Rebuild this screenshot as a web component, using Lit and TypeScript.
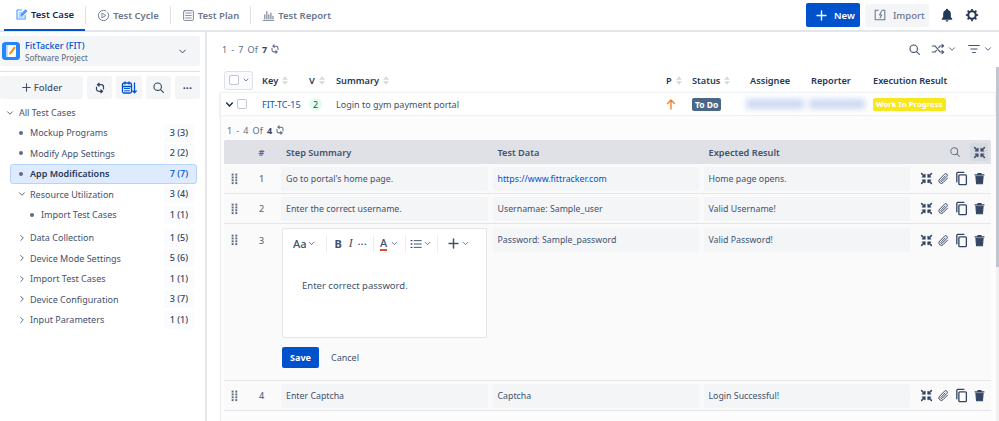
import { LitElement, css, html, svg } from "lit";
import { customElement } from "lit/decorators.js";

const icon = (w: number, body: unknown, cls = "") => html`<svg class="ic ${cls}" width=${w} height=${w} viewBox="0 0 16 16" fill="none" stroke="currentColor" stroke-width="1.4" stroke-linecap="round" stroke-linejoin="round">${body}</svg>`;

const chevDown = svg`<path d="M4 6l4 4 4-4"/>`;
const chevRight = svg`<path d="M6 4l4 4-4 4"/>`;
const search = svg`<circle cx="7" cy="7" r="4.6"/><path d="M10.5 10.5L14 14"/>`;
const refresh = svg`<path d="M7 2.5L5 4.2 7 5.8M5.2 4.2H9.5a2.5 2.5 0 0 1 2.5 2.5V9"/><path d="M9 13.5l2-1.7-2-1.6M10.8 11.8H6.5A2.5 2.5 0 0 1 4 9.3V7"/>`;
const expand = svg`<path d="M2 2l4 4M6 3v3H3M14 2l-4 4M10 3v3h3M2 14l4-4M6 13v-3H3M14 14l-4-4M10 13v-3h3" stroke-width="1.8"/>`;
const clip = svg`<path d="M13 7.5l-5.5 5.6a3 3 0 0 1-4.3-4.2l6-6.2a2 2 0 0 1 2.9 2.8l-5.8 6a.9.9 0 0 1-1.3-1.3L10 5" stroke-width="1.2"/>`;
const copy = svg`<rect x="5.2" y="4.2" width="8" height="10.3" rx="1"/><path d="M3 11.5V2.5a1 1 0 0 1 1-1h6.5"/>`;
const trash = svg`<path d="M2.5 3.6h11M6 3V2h4v1" /><path d="M3.6 5.2h8.8l-.8 9.3H4.4z" fill="currentColor"/>`;
const drag = svg`<g fill="currentColor" stroke="none">${[2, 5.5, 9, 12.5].map((y) => svg`<rect x="4.5" y=${y} width="2.4" height="2.4"/><rect x="9" y=${y} width="2.4" height="2.4"/>`)}</g>`;
const sort = html`<svg class="sort" width="6" height="9" viewBox="0 0 7 10" fill="#d5d9e0"><path d="M3.5 0L7 4H0zM3.5 10L0 6h7z"/></svg>`;

type Node = { label: string; count: string; kind: "dot" | "open" | "closed"; sub?: boolean; active?: boolean; gap?: boolean };
const tree: Node[] = [
  { label: "Mockup Programs", count: "3 (3)", kind: "dot" },
  { label: "Modify App Settings", count: "2 (2)", kind: "dot" },
  { label: "App Modifications", count: "7 (7)", kind: "dot", active: true },
  { label: "Resource Utilization", count: "3 (4)", kind: "open" },
  { label: "Import Test Cases", count: "1 (1)", kind: "dot", sub: true },
  { label: "Data Collection", count: "1 (5)", kind: "closed", gap: true },
  { label: "Device Mode Settings", count: "5 (6)", kind: "closed" },
  { label: "Import Test Cases", count: "1 (1)", kind: "closed" },
  { label: "Device Configuration", count: "3 (7)", kind: "closed" },
  { label: "Input Parameters", count: "1 (1)", kind: "closed" },
];

const steps = [
  { n: 1, step: "Go to portal's home page.", data: "https://www.fittracker.com", result: "Home page opens.", link: true },
  { n: 2, step: "Enter the correct username.", data: "Usernamae: Sample_user", result: "Valid Username!" },
  { n: 3, step: "", data: "Password: Sample_password", result: "Valid Password!", edit: true },
  { n: 4, step: "Enter Captcha", data: "Captcha", result: "Login Successful!" },
];

@customElement("app-root")
export class AppRoot extends LitElement {
  renderTabs() {
    return html`
      <div class="tab active">
        ${icon(13, svg`<path d="M12.5 9v4.5h-10v-11H8"/><path d="M5 6h3M5 8.5h2M5 11h5" stroke-width="1"/><path d="M7.5 9.5L7.8 7.6 13 2.4l1.3 1.3-5 5.3z" fill="#4c9aff"/>`)}
        Test Case
      </div>
      <i class="tabsep"></i>
      <div class="tab">
        ${icon(13, svg`<circle cx="8" cy="8" r="6.3" stroke-dasharray="32 3" stroke-width="1.2"/><path d="M6.5 5.3L10.8 8l-4.3 2.7z" stroke-width="1.1"/>`)}
        Test Cycle
      </div>
      <i class="tabsep"></i>
      <div class="tab">
        ${icon(13, svg`<rect x="2" y="2" width="12" height="12" rx="1" stroke-width="1.1"/><path d="M4.5 5h7M4.5 8h7M4.5 11h7" stroke-width="1"/>`)}
        Test Plan
      </div>
      <i class="tabsep"></i>
      <div class="tab">
        ${icon(13, svg`<path d="M1.5 14h13" stroke-width="1.1"/><path d="M3.5 12V7M6 12V3M8.5 12V7M11 12V5M13.5 12V9" stroke-width="1.3"/>`)}
        Test Report
      </div>
      <div class="top-actions">
        <button class="new">${icon(13, svg`<path d="M8 2.5v11M2.5 8h11" stroke-width="1.7"/>`)}New</button>
        <button class="import">${icon(14, svg`<path d="M10 2.5h3.5v11h-11v-11H6" stroke-width="1.2"/><path d="M9.5 4L7.5 8h2.5l-2 3.5" stroke-width="1.2"/>`)}Import</button>
        <svg class="bell" width="14" height="14" viewBox="0 0 16 16" fill="#253858"><path d="M8 1a1.4 1.4 0 0 1 1.4 1.3C11.5 3 12.4 4.800 12.4 7v3.400L14 12.500v.8H2v-.8l1.600-2.100V7c0-2.200.9-4 3-4.700A1.400 1.400 0 0 1 8 1zM6.300 14h3.400a1.700 1.700 0 0 1-3.400 0z"/></svg>
        <svg class="gear" width="14" height="14" viewBox="0 0 16 16" fill="none" stroke="#253858"><circle cx="8" cy="8" r="4.300" stroke-width="2.400"/><path d="M8 1v2.200M8 12.800V15M1 8h2.200M12.800 8H15M3 3l1.600 1.600M11.400 11.400L13 13M13 3l-1.600 1.600M4.600 11.400L3 13" stroke-width="2"/></svg>
      </div>
    `;
  }

  renderSidebar() {
    return html`
      <aside>
        <div class="project">
          <svg width="18" height="18" viewBox="0 0 18 18">
            <rect width="18" height="18" rx="3.500" fill="#2684ff"/>
            <rect x="4" y="3" width="10" height="12" rx="1" fill="#fff"/>
            <path d="M4 3h1.800v12H4z" fill="#b3d4ff"/>
            <path d="M7 12.800l.6-2.400 4.500-6 1.700 1.300-4.500 6z" fill="#ff8b00"/>
          </svg>
          <div class="ptext">
            <div class="pname">FitTacker (FIT)</div>
            <div class="ptype">Software Project</div>
          </div>
          ${icon(11, chevDown, "pchev")}
        </div>
        <div class="tools">
          <button class="tool folder">${icon(11, svg`<path d="M8 2.500v11M2.500 8h11" stroke-width="1.600"/>`)}Folder</button>
          <button class="tool">${icon(14, refresh)}</button>
          <button class="tool blue">${icon(16, svg`<rect x="1.500" y="3" width="9" height="10" rx="1.500" stroke-width="1.300"/><path d="M1.500 6.500h9M4 1.800V4M8 1.800V4M13.500 3v9.500M11.800 11l1.700 1.800 1.700-1.800" stroke-width="1.300"/><path d="M3.500 8.500h5M3.500 10.800h5" stroke-width="1"/>`)}</button>
          <button class="tool">${icon(13, search)}</button>
          <button class="tool dots">···</button>
        </div>
        <div class="all">${icon(10, chevDown)}All Test Cases</div>
        ${tree.map(
          (n) => html`
            <div class="node ${n.active ? "active" : ""} ${n.sub ? "sub" : ""} ${n.gap ? "gap" : ""}">
              <span class="mark">
                ${n.kind === "dot" ? html`<i class="dot"></i>` : icon(10, n.kind === "open" ? chevDown : chevRight)}
              </span>
              <span class="label">${n.label}</span>
              <span class="count">${n.count}</span>
            </div>
          `
        )}
      </aside>
    `;
  }

  renderEditor() {
    return html`
      <div class="editor-wrap">
        <div class="editor">
          <div class="etools">
            <span class="aa">Aa</span>${icon(9, chevDown, "mini")}
            <i class="esep"></i>
            <b class="eb">B</b><i class="ei">I</i><span class="edots">···</span>
            <i class="esep s2"></i>
            <span class="ea">A</span>${icon(9, chevDown, "mini m2")}
            <i class="esep s3"></i>
            ${icon(12, svg`<path d="M5.500 3.500H15M5.500 8H15M5.500 12.500H15" stroke-width="1.300"/><path d="M1.500 3.500h1M1.500 8h1M1.500 12.500h1" stroke-width="1.800"/>`)}${icon(9, chevDown, "mini m1")}
            <i class="esep s4"></i>
            ${icon(13, svg`<path d="M8 2.500v11M2.500 8h11" stroke-width="1.800"/>`)}${icon(9, chevDown, "mini m1")}
          </div>
          <div class="etext">Enter correct password.</div>
        </div>
        <div class="actions">
          <button class="save">Save</button>
          <span class="cancel">Cancel</span>
        </div>
      </div>
    `;
  }

  renderStep(s: (typeof steps)[number]) {
    return html`
      <div class="srow ${s.edit ? "editing" : ""}">
        <span class="grip">${icon(13, drag)}</span>
        <span class="num">${s.n}</span>
        ${s.edit ? this.renderEditor() : html`<div class="cell">${s.step}</div>`}
        <div class="cell ${s.link ? "link" : ""}">${s.data}</div>
        <div class="cell">${s.result}</div>
        <div class="ops">
          ${icon(13, expand)}${icon(13, clip)}${icon(15, copy)}${icon(13, trash)}
        </div>
      </div>
    `;
  }

  render() {
    return html`
      <div class="top">${this.renderTabs()}</div>
      <div class="body">
        ${this.renderSidebar()}
        <main>
          <div class="pager">
            <span class="range">1 - 7 Of <b>7</b></span>${icon(12, refresh)}
            <div class="pright">
              ${icon(13, search)}
              <span class="gap-ic"></span>
              ${icon(14, svg`<path d="M1.500 4.500h3l6 7h3.500M1.500 11.500h3l1.700-2M8.800 6.400l1.700-1.900H14M12.500 2.800L14.500 4.500l-2 1.700M12.500 9.800l2 1.700-2 1.700" stroke-width="1.200"/>`)}
              ${icon(10, chevDown)}
              <span class="gap-ic"></span>
              ${icon(14, svg`<path d="M2 4h12M4.500 8h7M6.500 12h3" stroke-width="1.300"/>`)}
              ${icon(10, chevDown)}
            </div>
          </div>
          <div class="thead cols">
            <span class="selbox"><i class="check"></i>${icon(8, chevDown)}</span>
            <span class="th">Key ${sort}</span>
            <span class="th">V ${sort}</span>
            <span class="th">Summary ${sort}</span>
            <span class="th">P ${sort}</span>
            <span class="th">Status ${sort}</span>
            <span class="th">Assignee</span>
            <span class="th">Reporter</span>
            <span class="th">Execution Result</span>
          </div>
          <div class="case cols">
            <span class="rowsel">${icon(9, svg`<path d="M3 5.500l5 5 5-5" stroke-width="2.600"/>`)}<i class="check"></i></span>
            <span class="key">FIT-TC-15</span>
            <span><span class="ver">2</span></span>
            <span class="sum">Login to gym payment portal</span>
            <span class="prio"><svg width="10" height="11" viewBox="0 0 10 11" fill="none" stroke="#f57c22" stroke-width="1.300" stroke-linecap="round" stroke-linejoin="round"><path d="M5 10V1M1.500 4.500L5 1l3.500 3.500"/></svg></span>
            <span><span class="todo">To Do</span></span>
            <span class="blurred b1"></span>
            <span class="blurred b2"></span>
            <span><span class="wip">Work In Progress</span></span>
          </div>
          <div class="steps">
            <div class="spager"><span class="range">1 - 4 Of <b>4</b></span>${icon(12, refresh)}</div>
            <div class="shead">
              <span></span>
              <span class="num">#</span>
              <span class="sh">Step Summary</span>
              <span class="sh">Test Data</span>
              <span class="sh">Expected Result</span>
              <span class="shops">${icon(12, search)}<span class="exp">${icon(13, expand)}</span></span>
            </div>
            ${steps.map((s) => this.renderStep(s))}
          </div>
          <div class="track"><div class="thumb"></div></div>
        </main>
      </div>
    `;
  }

  static styles = css`
    :host {
      display: block;
      width: 999px;
      height: 421px;
      overflow: hidden;
      background: #fff;
      font-family: "Noto Sans", sans-serif;
      font-size: 9px;
      color: #42526e;
    }
    * { box-sizing: border-box; }
    button { font-family: inherit; border: none; cursor: pointer; }
    b { font-weight: 700; }
    .ic { flex: none; display: block; }

    .top {
      display: flex;
      align-items: center;
      height: 32px;
      padding-left: 4px;
      border-bottom: 2px solid #e4e6ea;
    }
    .tab {
      display: flex;
      align-items: center;
      gap: 3px;
      height: 31px;
      padding: 0 11px;
      font-size: 9.500px;
      font-weight: 600;
      color: #6b778c;
    }
    .tab.active {
      color: #172b4d;
      border-bottom: 2px solid #0052cc;
    }
    .tab.active .ic { color: #4c9aff; }
    .tab .ic { color: #6b778c; }
    .tabsep { width: 1px; height: 18px; background: #dfe1e6; }
    .top-actions { margin-left: auto; display: flex; align-items: center; }
    .new {
      display: flex;
      align-items: center;
      gap: 6px;
      width: 54px;
      height: 24px;
      padding-left: 9px;
      margin-right: 5px;
      border-radius: 2px;
      background: #0052cc;
      color: #fff;
      font-size: 9.500px;
      font-weight: 600;
    }
    .import {
      display: flex;
      align-items: center;
      gap: 6px;
      width: 64px;
      height: 23px;
      padding-left: 8px;
      border-radius: 3px;
      background: #f4f5f7;
      color: #6b778c;
      font-size: 9.500px;
      font-weight: 500;
    }
    .bell { margin-left: 11px; }
    .gear { margin: 0 20px 0 11px; }

    .body { display: flex; height: 389px; }
    aside {
      flex: none;
      width: 207px;
      border-right: 2px solid #e4e6ea;
      padding-right: 5px;
    }
    .project {
      display: flex;
      align-items: center;
      height: 30px;
      margin-top: 4px;
      padding-left: 2px;
      gap: 5px;
      background: #f4f5f7;
      border-radius: 3px;
    }
    .pname { color: #0052cc; font-size: 9px; line-height: 12px; font-weight: 500; }
    .ptype { color: #6b778c; font-size: 8px; line-height: 11px; font-weight: 500; }
    .pchev { margin-left: auto; margin-right: 12px; color: #344563; }
    .tools {
      display: flex;
      gap: 4px;
      margin-top: 5px;
      padding-top: 4px;
      border-top: 1px solid #dfe1e6;
    }
    .tool {
      display: flex;
      align-items: center;
      justify-content: center;
      width: 25.250px;
      height: 23px;
      border-radius: 3px;
      background: #f4f5f7;
      color: #344563;
      font-size: 9.500px;
    }
    .tool.folder { width: 83px; gap: 2px; color: #42526e; font-weight: 500; }
    .tool.blue { color: #0052cc; }
    .tool.dots { font-weight: 700; font-size: 11px; }
    .all {
      display: flex;
      align-items: center;
      gap: 4px;
      height: 20px;
      margin-top: 3.500px;
      padding-left: 5px;
    }
    .node {
      display: flex;
      align-items: center;
      height: 20.500px;
      padding-left: 17px;
    }
    .node.sub { padding-left: 28px; }
    .node.gap { margin-top: 2.500px; }
    .mark { width: 13px; display: flex; flex: none; }
    .dot { width: 4px; height: 4px; margin-left: 2px; border-radius: 50%; background: #5e6c84; }
    .count {
      margin-left: auto;
      margin-right: 6px;
      padding: 0 6px;
      height: 18px;
      line-height: 18px;
      background: #fafbfc;
      border-radius: 2px;
      color: #344563;
      font-weight: 500;
    }
    .node.active {
      margin: 0 3px 0 10px;
      padding-left: 6px;
      background: #deebff;
      border: 1px solid #b3d4ff;
      border-radius: 3px;
    }
    .node.active .label { color: #253858; font-weight: 600; }
    .node.active .count { background: none; color: #0052cc; margin-right: 2px; }

    main { flex: 1; min-width: 0; position: relative; padding-right: 3px; display: flex; flex-direction: column; }
    .track { position: absolute; top: 35px; right: 0; bottom: 0; width: 3px; background: #f1f1f1; }
    .thumb { height: 200px; background: #c1c7d0; }
    .pager {
      flex: none;
      display: flex;
      align-items: center;
      gap: 2px;
      height: 34px;
      padding: 0 3px 0 15px;
      color: #5e6c84;
    }
    .range { word-spacing: 1.800px; }
    .range b { color: #344563; }
    .pright { margin-left: auto; display: flex; align-items: center; gap: 2px; color: #42526e; }
    .gap-ic { width: 6px; }
    .cols {
      display: grid;
      grid-template-columns: 42px 47px 27px 330px 26px 58px 61px 62px 1fr;
      align-items: center;
    }
    .thead { flex: none; height: 24px; padding-left: 13px; margin-top: 2px; }
    .th { display: flex; align-items: center; gap: 4px; color: #253858; font-weight: 600; font-size: 9.200px; white-space: nowrap; }
    .selbox {
      display: flex;
      align-items: center;
      gap: 3px;
      width: 29px;
      height: 19px;
      margin-left: 4px;
      padding-left: 4px;
      border: 1px solid #dfe1e6;
      border-radius: 3px;
      background: #fafbfc;
    }
    .check { display: block; width: 10px; height: 10px; border: 1px solid #c1c7d0; border-radius: 2px; background: #fff; flex: none; }
    .case {
      flex: none;
      height: 24px;
      margin-left: 13px;
      background: #fff;
      border: 1px solid #f0f1f3;
      box-shadow: 0 1px 2px rgba(9, 30, 66, 0.18);
      grid-template-columns: 41px 47px 27px 330px 26px 58px 61px 62px 1fr;
    }
    .rowsel { display: flex; align-items: center; gap: 3px; padding-left: 4px; color: #172b4d; }
    .key { color: #0052cc; }
    .ver {
      display: inline-block;
      width: 13px;
      height: 13px;
      line-height: 13px;
      border-radius: 50%;
      text-align: center;
      background: #e3fcef;
      color: #006644;
    }
    .prio { display: flex; }
    .todo {
      display: inline-block;
      padding: 0 3px;
      height: 13px;
      line-height: 13px;
      border-radius: 2px;
      background: #4a6785;
      color: #fff;
      font-weight: 700;
      font-size: 8.500px;
    }
    .blurred { display: block; height: 10px; filter: blur(3px); background: #ccd9f2; }
    .b1 { width: 58px; margin-left: -4px; }
    .b2 { width: 56px; margin-left: -2px; }
    .wip {
      display: inline-block;
      padding: 0 3px;
      height: 13px;
      line-height: 13px;
      border-radius: 2px;
      background: #f9e71e;
      color: #fff;
      font-weight: 700;
      font-size: 7.800px;
      white-space: nowrap;
    }
    .steps {
      flex: 1;
      margin-left: 13px;
      padding: 0 5px 0 3px;
      border-left: 1px solid #ebecf0;
      background: #fcfcfc;
    }
    .spager {
      display: flex;
      align-items: center;
      gap: 2px;
      height: 24px;
      padding: 4px 0 0 3px;
      color: #5e6c84;
    }
    .shead, .srow {
      display: grid;
      grid-template-columns: 24px 33px 211.500px 211px 211px 1fr;
    }
    .shead { height: 24px; align-items: center; background: #dfe1e6; border-radius: 2px 2px 0 0; }
    .sh { padding-left: 5px; font-weight: 600; color: #42526e; font-size: 9.200px; }
    .shops { display: flex; justify-content: flex-end; align-items: center; gap: 9px; padding-right: 3px; color: #6b778c; }
    .exp { display: flex; align-items: center; justify-content: center; width: 18px; height: 18px; color: #42526e; background: #d6d9df; border-radius: 2px; }
    .num { text-align: center; padding-right: 6px; font-size: 9px; color: #5e6c84; font-weight: 500; }
    .shead .num { font-weight: 700; }
    .srow {
      background: #fafafa;
      border-bottom: 1px solid #e4e6ea;
      height: 30px;
      align-items: center;
    }
    .srow.editing { height: 157px; align-items: start; padding-top: 4px; }
    .grip { display: flex; padding-left: 3.500px; color: #5e6c84; }
    .srow.editing .grip { margin-top: 5px; }
    .srow.editing .num { margin-top: 6px; }
    .cell {
      height: 24px;
      line-height: 24px;
      padding-left: 5px;
      margin-right: 5px;
      background: #f4f5f7;
      border-radius: 2px;
      white-space: nowrap;
      font-size: 8.800px;
    }
    .cell.link { color: #0052cc; }
    .ops { display: flex; align-items: center; justify-content: flex-end; gap: 4px; padding-right: 5.500px; color: #344563; }
    .srow.editing .ops { margin-top: 5px; }
    .editor { width: 205px; height: 110px; margin-left: 1px; background: #fff; border: 1px solid #e4e6ea; border-radius: 2px; }
    .etools { display: flex; align-items: center; height: 23px; padding: 0 0 0 10px; margin-top: 3px; color: #42526e; }
    .mini { margin-left: 0; }
    .m1 { margin-left: 1px; }
    .m2 { margin-left: 3px; }
    .aa { font-size: 11px; font-weight: 500; }
    .esep { width: 1px; height: 16px; background: #ebecf0; margin: 0 8px 0 10px; }
    .eb { font-size: 11px; font-weight: 700; margin-left: 0; }
    .ei { font-family: "Liberation Serif", serif; font-size: 12px; margin-left: 7px; font-style: italic; }
    .edots { margin-left: 5px; font-weight: 700; letter-spacing: 0.500px; }
    .esep.s2 { margin: 0 6px; }
    .ea { font-size: 11px; font-weight: 500; border-bottom: 2px solid #e5493a; line-height: 12px; }
    .esep.s3 { margin: 0 4px 0 6px; }
    .esep.s4 { margin: 0 9px 0 5px; }
    .etext { padding: 24px 0 0 19px; font-size: 9.500px; }
    .actions { display: flex; align-items: center; gap: 12px; margin-top: 9px; margin-left: 1px; }
    .save {
      width: 37px;
      height: 21px;
      border-radius: 2px;
      background: #0052cc;
      color: #fff;
      font-weight: 700;
      font-size: 9px;
    }
    .cancel { color: #42526e; }
  `;
}
